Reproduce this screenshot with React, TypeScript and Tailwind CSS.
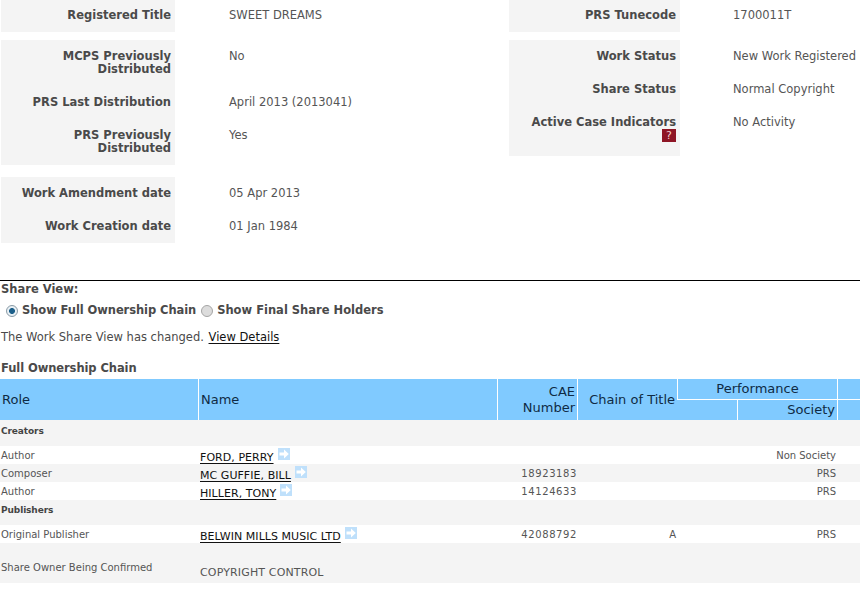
import React from "react";

const Field = ({ label, value, help, right, className = "" }: { label: string; value: string; help?: boolean; right?: boolean; className?: string }) => (
  <div className={`grid grid-cols-subgrid col-span-2 ${className}`}>
    <div className="bg-[#f4f4f4] text-right font-bold text-[#4a4a4a] pr-1 leading-[13px]">
      {label}
      {help && (
        <div className="flex justify-end">
          <span className="w-[14px] h-[13px] bg-[#8e1525] text-[#f0d0d0] text-[11px] leading-[13px] text-center font-normal">?</span>
        </div>
      )}
    </div>
    <div className={`${right ? "pl-[53px]" : "pl-[54px]"} text-[#555] leading-[13px]`}>{value}</div>
  </div>
);

const Arrow = () => (
  <svg width="12" height="12" viewBox="0 0 12 12" className="ml-1 -mt-[4px] shrink-0">
    <rect width="12" height="12" fill="#bfe0fb" />
    <path d="M1.5 4.5h4.5V1.5L10.8 6 6 10.5V7.5H1.5z" fill="#fff" />
  </svg>
);

const NameLink = ({ children }: { children: string }) => (
  <span className="flex h-[12px]">
    <a className="text-[#111] underline underline-offset-2">{children}</a>
    <Arrow />
  </span>
);

const Th = ({ className = "", children, ...rest }: React.ThHTMLAttributes<HTMLTableCellElement>) => (
  <th {...rest} className={`border-l border-white first:border-l-0 font-normal text-[13px] leading-[16px] text-[#0f2a44] p-0 ${className}`}>
    {children}
  </th>
);

type Row = { role: string; name: string; cae?: string; chain?: string; society?: string };

const Person = ({ r, shade }: { r: Row; shade: boolean }) => (
  <tr className={`h-[18px] ${shade ? "bg-[#f4f4f4]" : "bg-white"}`}>
    <td className="align-top pl-[1px] pt-[4px] leading-[12px]">{r.role}</td>
    <td className="align-top pl-[2px] pt-[6px] leading-[12px] text-[11px] tracking-[0.05px] whitespace-nowrap">
      <NameLink>{r.name}</NameLink>
    </td>
    <td className="align-top text-right pt-[4px] leading-[12px] tracking-[0.6px]">{r.cae}</td>
    <td className="align-top text-right pr-[1px] pt-[4px] leading-[12px]">{r.chain}</td>
    <td></td>
    <td className="align-top text-right pr-[1px] pt-[4px] leading-[12px] whitespace-nowrap">{r.society}</td>
    <td></td>
  </tr>
);

export default function App() {
  return (
    <div className="w-[860px] h-[590px] overflow-hidden bg-white text-[11.5px] font-['DejaVu_Sans',Verdana,sans-serif]">
      <div className="flex h-[280px] pl-[1px]">
        <div className="w-[508px] grid grid-cols-[174px_1fr] content-start">
          <Field label="Registered Title" value="SWEET DREAMS" className="h-[32px] [&>div]:pt-[9px]" />
          <div className="col-span-2 h-2" />
          <Field label="MCPS Previously Distributed" value="No" className="h-[46px] [&>div]:pt-[10px]" />
          <Field label="PRS Last Distribution" value="April 2013 (2013041)" className="h-[33px] [&>div]:pt-[10px]" />
          <Field label="PRS Previously Distributed" value="Yes" className="h-[46px] [&>div]:pt-[10px]" />
          <div className="col-span-2 h-3" />
          <Field label="Work Amendment date" value="05 Apr 2013" className="h-[33px] [&>div]:pt-[10px]" />
          <Field label="Work Creation date" value="01 Jan 1984" className="h-[33px] [&>div]:pt-[10px]" />
        </div>
        <div className="flex-1 grid grid-cols-[171px_1fr] content-start">
          <Field right label="PRS Tunecode" value="1700011T" className="h-[32px] [&>div]:pt-[9px]" />
          <div className="col-span-2 h-2" />
          <Field right label="Work Status" value="New Work Registered" className="h-[33px] [&>div]:pt-[10px]" />
          <Field right label="Share Status" value="Normal Copyright" className="h-[33px] [&>div]:pt-[10px]" />
          <Field right label="Active Case Indicators" value="No Activity" help className="h-[50px] [&>div]:pt-[10px]" />
        </div>
      </div>

      <div className="border-t border-black pl-[1px] text-[#4a4a4a]">
        <div className="font-bold leading-[13px] pt-[2px]">Share View:</div>
        <div className="flex items-center h-[13px] mt-[8px] pl-[5px] font-bold">
          <input type="radio" readOnly checked className="appearance-none w-3 h-3 rounded-full border border-[#8a9aa5] bg-[radial-gradient(circle,#1c5f8a_38%,#e8f0f5_45%)] mr-1" />
          <span className="tracking-[-0.08px]">Show Full Ownership Chain</span>
          <input type="radio" readOnly className="appearance-none w-3 h-3 rounded-full border border-[#a5a5a5] bg-[#dcdcdc] ml-[5px] mr-1" />
          <span>Show Final Share Holders</span>
        </div>
        <div className="leading-[13px] mt-[14px]">
          The Work Share View has changed.{" "}
          <a className="text-[#111] underline underline-offset-2 ml-[1px]">View Details</a>
        </div>
        <div className="font-bold leading-[13px] mt-[18px] tracking-[-0.08px]">Full Ownership Chain</div>
      </div>

      <table className="table-fixed border-separate border-spacing-0 w-[860px] mt-[4px] text-[10px] text-[#555]">
        <colgroup>
          <col className="w-[198px]" />
          <col className="w-[299px]" />
          <col className="w-[80px]" />
          <col className="w-[100px]" />
          <col className="w-[60px]" />
          <col className="w-[100px]" />
          <col className="w-[23px]" />
        </colgroup>
        <thead className="bg-[#80caff]">
          <tr className="h-[20px]">
            <Th rowSpan={2} className="text-left pl-[2px]">Role</Th>
            <Th rowSpan={2} className="text-left pl-[2px]">Name</Th>
            <Th rowSpan={2} className="text-right pr-[2px]">CAE Number</Th>
            <Th rowSpan={2} className="text-right pr-[2px]">Chain of Title</Th>
            <Th colSpan={2} className="text-center">Performance</Th>
            <Th></Th>
          </tr>
          <tr className="h-[21px]">
            <Th className="border-t"></Th>
            <Th className="border-t text-right pr-[2px]">Society</Th>
            <Th className="border-t"></Th>
          </tr>
        </thead>
        <tbody>
          <tr className="h-[26px] bg-[#f4f4f4]">
            <td colSpan={7} className="align-top pl-[1px] pt-[5px] leading-[12px] font-bold text-[#444] text-[9px] tracking-[-0.1px]">Creators</td>
          </tr>
          <Person shade={false} r={{ role: "Author", name: "FORD, PERRY", society: "Non Society" }} />
          <Person shade r={{ role: "Composer", name: "MC GUFFIE, BILL", cae: "18923183", society: "PRS" }} />
          <Person shade={false} r={{ role: "Author", name: "HILLER, TONY", cae: "14124633", society: "PRS" }} />
          <tr className="h-[25px] bg-[#f4f4f4]">
            <td colSpan={7} className="align-top pl-[1px] pt-[4px] leading-[12px] font-bold text-[#444] text-[9px] tracking-[-0.1px]">Publishers</td>
          </tr>
          <Person shade={false} r={{ role: "Original Publisher", name: "BELWIN MILLS MUSIC LTD", cae: "42088792", chain: "A", society: "PRS" }} />
          <tr className="h-[40px] bg-[#f4f4f4]">
            <td className="align-top pl-[1px] pt-[19px] leading-[12px] whitespace-nowrap">Share Owner Being Confirmed</td>
            <td className="align-top pl-[2px] pt-[23px] leading-[13px] text-[11px] tracking-[0.15px]">COPYRIGHT CONTROL</td>
            <td colSpan={5}></td>
          </tr>
        </tbody>
      </table>
    </div>
  );
}
